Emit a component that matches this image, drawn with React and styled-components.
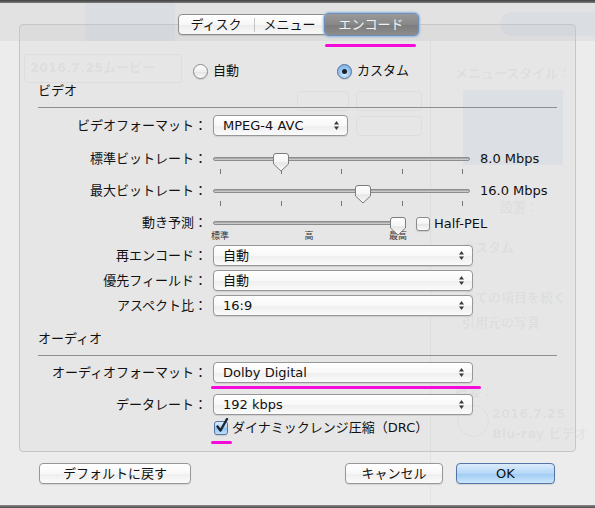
import React from 'react';
import styled, { createGlobalStyle, css } from 'styled-components';

const GlobalStyle = createGlobalStyle`
  html, body {
    margin: 0;
    padding: 0;
  }
  body {
    font-family: "DejaVu Sans", "Noto Sans CJK JP", sans-serif;
  }
`;

const Page = styled.div`
  position: relative;
  width: 595px;
  height: 508px;
  overflow: hidden;
  background: #ececec;
  font-size: 13px;
  line-height: 16px;
  color: #111;
`;

/* faint window content seen through the sheet */
const Ghost = styled.div`
  position: absolute;
  inset: 0;
  z-index: 0;
  pointer-events: none;
`;

const GhostItem = styled.div`
  position: absolute;
  color: rgba(0, 0, 0, 0.05);
  font-weight: bold;
  white-space: nowrap;
`;

const GhostBand = styled.div`
  position: absolute;
  top: 3px;
  left: 0;
  right: 0;
  height: 38px;
  background: #e2e2e2;
`;

const GhostShape = styled.div`
  position: absolute;
  background: ${(p) => p.$bg || 'transparent'};
  border: ${(p) => (p.$border ? '1px solid rgba(0,0,0,0.035)' : 'none')};
  border-radius: ${(p) => p.$radius || 0}px;
`;

const Sheet = styled.div`
  position: absolute;
  inset: 0;
  z-index: 1;
  display: flex;
  flex-direction: column;
`;

const TopEdge = styled.div`
  height: 3px;
  background: linear-gradient(#3e3e3e, #7c7c7c);
`;

const BottomEdge = styled.div`
  margin-top: auto;
  height: 3px;
  background: linear-gradient(#8a8a8a, #4c4c4c);
`;

const Tabs = styled.div`
  position: relative;
  z-index: 2;
  align-self: center;
  display: flex;
  align-items: center;
  margin-top: 11px;
  height: 19px;
  border: 1px solid #8c8c8c;
  border-radius: 4px;
  background: linear-gradient(#ffffff, #f7f7f7 50%, #ececec 51%, #f9f9f9);
  box-shadow: 0 1px 1px rgba(0, 0, 0, 0.12);
`;

const Tab = styled.div`
  display: flex;
  align-items: center;
  justify-content: center;
  width: ${(p) => p.$w}px;
  height: 19px;
  color: #111;
  ${(p) =>
    p.$active &&
    css`
      height: 21px;
      margin: -1px -1px -1px 0;
      border-radius: 4px;
      color: #f2f2f2;
      background: linear-gradient(#999999, #878787 50%, #7c7c7c 51%, #8c8c8c);
      box-shadow: 0 0 0 1px #6f8fb8, 0 0 2px 2px #8fb6e6;
    `}
`;

const TabDivider = styled.div`
  width: 1px;
  height: 14px;
  background: #c4c4c4;
`;

const TabMark = styled.div`
  position: absolute;
  left: 146px;
  top: 29px;
  width: 91px;
  height: 3px;
  border-radius: 2px;
  background: #f40ad9;
`;

const GroupBox = styled.div`
  margin: -11px 19px 0;
  padding: 0 18px 7px;
  border: 1px solid #c6c6c6;
  border-radius: 4px;
  background: rgba(0, 0, 0, 0.022);
  display: flex;
  flex-direction: column;
`;

const RadioRow = styled.div`
  display: flex;
  align-items: center;
  height: 16px;
  margin-top: 38px;
  padding-left: 155px;
`;

const RadioItem = styled.label`
  display: flex;
  align-items: center;
  gap: 5px;
  width: ${(p) => p.$w || 'auto'};
`;

const RadioDot = styled.span`
  width: 13px;
  height: 13px;
  border-radius: 50%;
  border: 1px solid #8a8a8a;
  display: flex;
  align-items: center;
  justify-content: center;
  background: linear-gradient(#ffffff, #f0f0f0 50%, #e2e2e2 51%, #fbfbfb);
  box-shadow: 0 1px 1px rgba(0, 0, 0, 0.12);
  ${(p) =>
    p.$on &&
    css`
      border-color: #55739b;
      background: radial-gradient(circle at 50% 70%, #d9ecff 0%, #9cc8f2 45%, #6fa4de 100%);
      &::after {
        content: '';
        width: 5px;
        height: 5px;
        border-radius: 50%;
        background: #17202b;
      }
    `}
`;

const Heading = styled.div`
  margin-top: ${(p) => p.$top}px;
  height: 16px;
`;

const Divider = styled.div`
  margin-top: 8px;
  height: 1px;
  background: #8e8e8e;
`;

const FormRow = styled.div`
  display: grid;
  grid-template-columns: 169px 1fr;
  column-gap: 6px;
  align-items: ${(p) => (p.$slider ? 'start' : 'center')};
  height: ${(p) => p.$h}px;
  margin-top: ${(p) => p.$top || 0}px;
`;

const Label = styled.div`
  text-align: right;
  white-space: nowrap;
  padding-top: ${(p) => (p.$slider ? 7 : 0)}px;
`;

const Popup = styled.div`
  box-sizing: border-box;
  width: ${(p) => p.$w}px;
  height: 21px;
  padding: 0 7px 0 9px;
  border: 1px solid #979797;
  border-radius: 4px;
  display: flex;
  align-items: center;
  justify-content: space-between;
  background: linear-gradient(#ffffff, #f8f8f8 50%, #eeeeee 51%, #fbfbfb);
  box-shadow: 0 1px 1px rgba(0, 0, 0, 0.1);
  white-space: nowrap;
`;

const Arrows = () => (
  <svg width="7" height="11" viewBox="0 0 7 11">
    <path d="M3.5 1 L6 4.5 H1 Z" fill="#3a3a3a" />
    <path d="M3.5 10 L6 6.5 H1 Z" fill="#3a3a3a" />
  </svg>
);

const SliderLine = styled.div`
  display: flex;
  align-items: flex-start;
`;

const SliderBox = styled.div`
  position: relative;
  width: ${(p) => p.$w}px;
  height: 32px;
`;

const Track = styled.div`
  margin-top: 13px;
  height: 4px;
  box-sizing: border-box;
  border: 1px solid #8d8d8d;
  border-radius: 2px;
  background: linear-gradient(#9d9d9d, #d9d9d9);
`;

const Ticks = styled.div`
  display: flex;
  justify-content: space-between;
  margin-top: 8px;
  padding: 0 7px;
`;

const Tick = styled.span`
  width: 1px;
  height: 5px;
  background: #777;
`;

const StepLabels = styled.div`
  display: flex;
  justify-content: space-between;
  margin: 6px -5px 0;
  font-size: 9px;
  line-height: 10px;
  color: #333;
`;

const StepLabel = styled.span`
  width: 24px;
  text-align: center;
`;

const ThumbWrap = styled.div`
  position: absolute;
  top: 9px;
  width: 16px;
  height: 19px;
`;

const Thumb = () => (
  <svg width="16" height="19" viewBox="0 0 16 19">
    <defs>
      <linearGradient id="thumbFill" x1="0" y1="0" x2="0" y2="1">
        <stop offset="0" stopColor="#ffffff" />
        <stop offset="0.5" stopColor="#f4f4f4" />
        <stop offset="0.52" stopColor="#e6e6e6" />
        <stop offset="1" stopColor="#fafafa" />
      </linearGradient>
    </defs>
    <path
      d="M3 0.5 H13 A2.5 2.5 0 0 1 15.5 3 V11 L8 18 L0.5 11 V3 A2.5 2.5 0 0 1 3 0.5 Z"
      fill="url(#thumbFill)"
      stroke="#7c7c7c"
    />
  </svg>
);

const Value = styled.div`
  margin-left: 10px;
  padding-top: 7px;
  white-space: nowrap;
`;

const CheckLabel = styled.label`
  display: flex;
  align-items: center;
  gap: 4px;
  margin-left: ${(p) => p.$left || 0}px;
  padding-top: ${(p) => p.$pt || 0}px;
  white-space: nowrap;
`;

const Box = styled.span`
  position: relative;
  width: 12px;
  height: 12px;
  border: 1px solid #8a8a8a;
  border-radius: 3px;
  background: linear-gradient(#ffffff, #f2f2f2 50%, #e4e4e4 51%, #fbfbfb);
  box-shadow: 0 1px 1px rgba(0, 0, 0, 0.12);
  ${(p) =>
    p.$on &&
    css`
      border-color: #56769f;
      background: linear-gradient(#dcecfd, #a8cff5 50%, #8fc0ef 51%, #c3e0fb);
    `}
`;

const CheckMark = styled.svg`
  position: absolute;
  left: 1px;
  top: -4px;
`;

const CheckRow = styled.div`
  display: flex;
  height: 14px;
  margin-top: 6px;
  padding-left: 176px;
`;

const Mark = styled.div`
  height: 3px;
  border-radius: 2px;
  background: #f40ad9;
  width: ${(p) => p.$w}px;
  margin: ${(p) => p.$m};
`;

const Buttons = styled.div`
  display: flex;
  align-items: center;
  gap: 13px;
  margin-top: 11px;
  padding: 0 40px 0 39px;
`;

const Button = styled.div`
  box-sizing: border-box;
  width: ${(p) => p.$w}px;
  height: 21px;
  display: flex;
  align-items: center;
  justify-content: center;
  border: 1px solid #979797;
  border-radius: 4px;
  background: linear-gradient(#ffffff, #f8f8f8 50%, #ededed 51%, #fbfbfb);
  box-shadow: 0 1px 1px rgba(0, 0, 0, 0.1);
  ${(p) => p.$push && 'margin-left: auto;'}
  ${(p) =>
    p.$primary &&
    css`
      border-color: #5475a5;
      background: linear-gradient(#dcecfc, #b4d7f7 50%, #9ccaf3 51%, #cde6fc);
    `}
`;

const Slider = ({ w, frac, ticks, steps }) => (
  <SliderBox $w={w}>
    <Track />
    {ticks && (
      <Ticks>
        {Array.from({ length: ticks }).map((_, i) => (
          <Tick key={i} />
        ))}
      </Ticks>
    )}
    {steps && (
      <StepLabels>
        {steps.map((s) => (
          <StepLabel key={s}>{s}</StepLabel>
        ))}
      </StepLabels>
    )}
    <ThumbWrap style={{ left: 7 + frac * (w - 14) - 8 }}>
      <Thumb />
    </ThumbWrap>
  </SliderBox>
);

const Check = ({ on }) => (
  <Box $on={on}>
    {on && (
      <CheckMark width="13" height="15" viewBox="0 0 13 15">
        <path d="M1.5 8.5 L4.5 12.5 L11 1" fill="none" stroke="#1b2633" strokeWidth="2.4" strokeLinecap="round" strokeLinejoin="round" />
      </CheckMark>
    )}
  </Box>
);

const PopupRow = ({ label, value, w = 260, top }) => (
  <FormRow $h={21} $top={top}>
    <Label>{label}</Label>
    <Popup $w={w}>
      <span>{value}</span>
      <Arrows />
    </Popup>
  </FormRow>
);

const App = () => {
  return (
    <Page>
      <GlobalStyle />
      <Ghost>
        <GhostBand />
        <GhostShape $bg="rgba(150,175,225,0.1)" style={{ left: 85, top: 3, width: 90, height: 38 }} />
        <GhostShape $bg="rgba(150,175,230,0.1)" $radius={12} style={{ left: 500, top: 12, width: 110, height: 24 }} />
        <GhostShape $border $radius={2} style={{ left: 24, top: 54, width: 156, height: 27 }} />
        <GhostItem style={{ left: 30, top: 60 }}>2016.7.25ムービー</GhostItem>
        <GhostShape $border $radius={4} style={{ left: 297, top: 91, width: 50, height: 18 }} />
        <GhostShape $border $radius={4} style={{ left: 356, top: 91, width: 64, height: 18 }} />
        <GhostShape $border $radius={4} style={{ left: 356, top: 116, width: 64, height: 18 }} />
        <GhostShape $bg="rgba(0,0,0,0.035)" style={{ left: 430, top: 41, width: 1, height: 467 }} />
        <GhostItem style={{ left: 455, top: 66 }}>メニュースタイル：</GhostItem>
        <GhostShape $bg="rgba(140,165,210,0.1)" style={{ left: 463, top: 90, width: 100, height: 75 }} />
        <GhostItem style={{ left: 500, top: 200 }}>設置：</GhostItem>
        <GhostItem style={{ left: 462, top: 240 }}>カスタム</GhostItem>
        <GhostItem style={{ left: 462, top: 290 }}>全ての項目を続く</GhostItem>
        <GhostItem style={{ left: 462, top: 315 }}>引用元の写真</GhostItem>
        <GhostItem style={{ left: 455, top: 384 }}>概要：</GhostItem>
        <GhostItem style={{ left: 492, top: 406 }}>2016.7.25</GhostItem>
        <GhostItem style={{ left: 492, top: 426 }}>Blu-ray ビデオ</GhostItem>
        <GhostShape $border $radius={16} style={{ left: 457, top: 405, width: 30, height: 30 }} />
      </Ghost>

      <Sheet>
        <TopEdge />
        <Tabs>
          <Tab $w={75}>ディスク</Tab>
          <TabDivider />
          <Tab $w={70}>メニュー</Tab>
          <Tab $w={93} $active>
            エンコード
          </Tab>
          <TabMark />
        </Tabs>

        <GroupBox>
          <RadioRow>
            <RadioItem $w="144px">
              <RadioDot />
              自動
            </RadioItem>
            <RadioItem>
              <RadioDot $on />
              カスタム
            </RadioItem>
          </RadioRow>

          <Heading $top={4}>ビデオ</Heading>
          <Divider />

          <PopupRow label="ビデオフォーマット：" value="MPEG-4 AVC" w={135} top={7} />

          <FormRow $h={32} $top={8} $slider>
            <Label $slider>標準ビットレート：</Label>
            <SliderLine>
              <Slider w={257} frac={0.25} ticks={5} />
              <Value>8.0 Mbps</Value>
            </SliderLine>
          </FormRow>

          <FormRow $h={32} $slider>
            <Label $slider>最大ビットレート：</Label>
            <SliderLine>
              <Slider w={257} frac={0.59} ticks={5} />
              <Value>16.0 Mbps</Value>
            </SliderLine>
          </FormRow>

          <FormRow $h={32} $slider>
            <Label $slider>動き予測：</Label>
            <SliderLine>
              <Slider w={192} frac={1} steps={['標準', '高', '最高']} />
              <CheckLabel $left={11} $pt={8}>
                <Check />
                Half-PEL
              </CheckLabel>
            </SliderLine>
          </FormRow>

          <PopupRow label="再エンコード：" value="自動" top={5} />
          <PopupRow label="優先フィールド：" value="自動" top={4} />
          <PopupRow label="アスペクト比：" value="16:9" top={4} />

          <Heading $top={15}>オーディオ</Heading>
          <Divider />

          <PopupRow label="オーディオフォーマット：" value="Dolby Digital" top={6} />
          <Mark $w={270} $m="3px 0 0 173px" />
          <PopupRow label="データレート：" value="192 kbps" top={5} />

          <CheckRow>
            <CheckLabel>
              <Check on />
              ダイナミックレンジ圧縮（DRC）
            </CheckLabel>
          </CheckRow>
          <Mark $w={21} $m="6px 0 0 173px" />
        </GroupBox>

        <Buttons>
          <Button $w={152}>デフォルトに戻す</Button>
          <Button $w={98} $push>
            キャンセル
          </Button>
          <Button $w={99} $primary>
            OK
          </Button>
        </Buttons>
        <BottomEdge />
      </Sheet>
    </Page>
  );
};

export default App;
